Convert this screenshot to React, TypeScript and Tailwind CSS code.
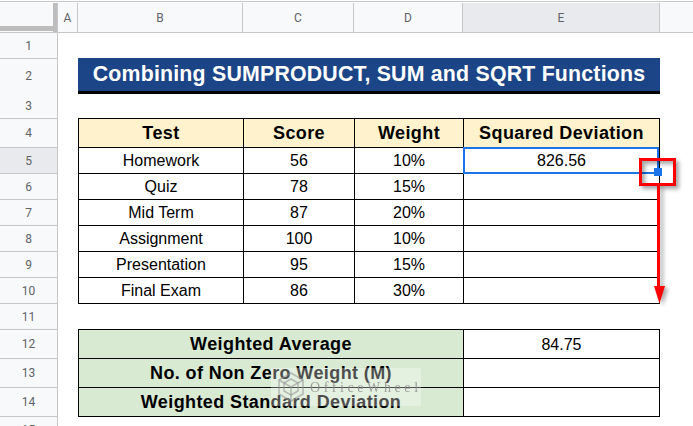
import React from "react";

const ROWGRID = "grid grid-cols-[58px_20px_165px_111px_109px_197px_33px]";
const LINE = "border-[#c7c7c7]";
const BLACK = "border-black";

function Num({ n, active }: { n: number; active?: boolean }) {
  return (
    <div
      className={`flex items-center justify-center border-r border-b ${LINE} text-[12px] text-[#5f6368] ${active ? "bg-[#e8eaed]" : "bg-[#f8f9fa]"}`}
      style={{ fontFamily: "Roboto, sans-serif" }}
    >
      {n}
    </div>
  );
}

function ColHead({ label, active }: { label: string; active?: boolean }) {
  return (
    <div
      className={`flex items-center justify-center border-r border-[#c7c7c7] text-[12px] text-[#5f6368] ${active ? "bg-[#e8eaed]" : "bg-[#f8f9fa]"}`}
      style={{ fontFamily: "Roboto, sans-serif" }}
    >
      {label}
    </div>
  );
}

function TCell({ children, bold, bg, last, span }: { children?: React.ReactNode; bold?: boolean; bg?: string; last?: boolean; span?: boolean }) {
  return (
    <div
      className={`h-full flex items-center justify-center border-l border-b ${BLACK} ${last ? "border-r" : ""} ${bold ? "font-bold text-[18px] tracking-[0.4px]" : "text-[16px] pt-px"} ${bg ?? ""} ${span ? "col-span-3" : ""} text-black whitespace-nowrap`}
    >
      {children}
    </div>
  );
}

const scores = [
  ["Homework", "56", "10%", "826.56"],
  ["Quiz", "78", "15%", ""],
  ["Mid Term", "87", "20%", ""],
  ["Assignment", "100", "10%", ""],
  ["Presentation", "95", "15%", ""],
  ["Final Exam", "86", "30%", ""],
];

const summary = [
  ["Weighted Average", "84.75"],
  ["No. of Non Zero Weight (M)", ""],
  ["Weighted Standard Deviation", ""],
];

function Blank({ n, h, line }: { n: number; h: string; line?: string }) {
  return (
    <div className={`${ROWGRID} ${h}`}>
      <Num n={n} />
      <div />
      {line ? <div className={`col-span-4 border-b ${line}`} /> : <div className="col-span-4" />}
      <div />
    </div>
  );
}

export default function App() {
  return (
    <div className="relative w-[693px] h-[426px] overflow-hidden bg-white" style={{ fontFamily: '"Liberation Sans", Arial, sans-serif' }}>
      <div className="h-[3px] bg-[#c7c7c7] border-y border-white" />

      <div className={`${ROWGRID} h-[30px] border-b ${LINE}`}>
        <div className="relative bg-[#f8f9fa] border-r border-[#c7c7c7]">
          <div className="absolute right-0 top-0 bottom-0 w-[4px] bg-[#bdbdbd]" />
          <div className="absolute left-0 right-0 top-[23px] h-[5px] bg-[#bdbdbd]" />
        </div>
        <ColHead label="A" />
        <ColHead label="B" />
        <ColHead label="C" />
        <ColHead label="D" />
        <ColHead label="E" active />
        <div className="bg-[#f8f9fa]" />
      </div>

      <Blank n={1} h="h-[26px]" line="border-[#1c4587]" />

      <div className={`${ROWGRID} h-[34px]`}>
        <Num n={2} />
        <div />
        <div className="col-span-4 flex items-center justify-center bg-[#1c4587] border-b-[3px] border-black text-white font-bold text-[21.33px] tracking-[0.2px] whitespace-nowrap">
          Combining SUMPRODUCT, SUM and SQRT Functions
        </div>
        <div />
      </div>

      <Blank n={3} h="h-[26px]" line="border-black" />

      <div className={`${ROWGRID} h-[29px]`}>
        <Num n={4} />
        <div />
        <TCell bold bg="bg-[#fff2cc]">Test</TCell>
        <TCell bold bg="bg-[#fff2cc]">Score</TCell>
        <TCell bold bg="bg-[#fff2cc]">Weight</TCell>
        <TCell bold bg="bg-[#fff2cc]" last>Squared Deviation</TCell>
        <div />
      </div>

      {scores.map((r, i) => (
        <div key={r[0]} className={`${ROWGRID} h-[26px]`}>
          <Num n={5 + i} active={i === 0} />
          <div />
          <TCell>{r[0]}</TCell>
          <TCell>{r[1]}</TCell>
          <TCell>{r[2]}</TCell>
          <div className="relative">
            <TCell last>{r[3]}</TCell>
            {i === 0 && (
              <div className="absolute left-0 top-[-1px] w-[196px] h-[27px] border-2 border-[#1a73e8]" />
            )}
          </div>
          <div />
        </div>
      ))}

      <Blank n={11} h="h-[26px]" line="border-black" />

      {summary.map((r, i) => (
        <div key={r[0]} className={`${ROWGRID} h-[29px]`}>
          <Num n={12 + i} />
          <div />
          <TCell bold span bg="bg-[#d9ead3]">{r[0]}</TCell>
          <TCell last>{r[1]}</TCell>
          <div />
        </div>
      ))}

      <div className={`${ROWGRID} h-[9px]`}>
        <div className="overflow-hidden bg-[#f8f9fa] border-r border-[#c7c7c7] flex justify-center text-[12px] leading-[26px] text-[#5f6368]" style={{ fontFamily: "Roboto, sans-serif" }}>
          15
        </div>
      </div>

      {/* annotation: fill handle */}
      <div className="absolute left-[654px] top-[168px] w-[8px] h-[8px] bg-[#1a73e8]" />

      {/* annotation: red box */}
      <div className="absolute left-[639px] top-[158px] w-[37px] h-[28px] border-[3px] border-[#ff0000] shadow-[3px_3px_4px_rgba(0,0,0,0.35),inset_3px_3px_4px_rgba(0,0,0,0.35)]" />

      {/* annotation: arrow */}
      <svg className="absolute left-[650px] top-[186px] drop-shadow-[3px_2px_2px_rgba(0,0,0,0.35)]" width="20" height="118" viewBox="0 0 20 118">
        <rect x="7" y="0" width="3" height="102" fill="#ff0000" />
        <polygon points="4,100 15,100 9.5,117.5" fill="#ff0000" />
      </svg>

      {/* watermark */}
      <div className="absolute left-[271px] top-[368px] w-[150px] h-[38px] bg-white/30 flex items-center">
        <svg className="ml-[6px] shrink-0" width="28" height="32" viewBox="0 0 28 32" fill="none" stroke="#8f8f8f" strokeOpacity="0.55" strokeWidth="1.6">
          <path d="M14 2 L26 9 V23 L14 30 L2 23 V9 Z" />
          <path d="M14 8 L21 12 V20 L14 24 L7 20 V12 Z" />
          <path d="M2 9 L14 16 L26 9 M14 16 V30" />
        </svg>
        <span className="ml-[5px] text-[14px] tracking-[3.6px] text-[#8a8a8a] opacity-80 whitespace-nowrap" style={{ fontFamily: '"Liberation Serif", serif' }}>
          OfficeWheel
        </span>
      </div>
    </div>
  );
}
